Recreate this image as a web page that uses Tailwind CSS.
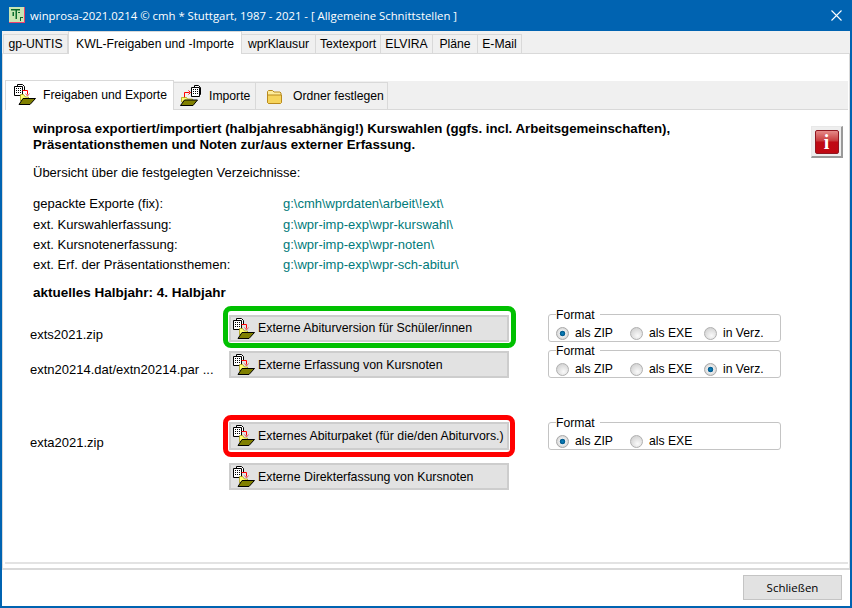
<!DOCTYPE html>
<html>
<head>
<meta charset="utf-8">
<script src="https://cdn.jsdelivr.net/npm/@tailwindcss/browser@4"></script>
<title>winprosa</title>
</head>
<body class="bg-white">
<svg width="0" height="0" class="absolute">
  <defs>
    <!-- export icon: sheets going into a folder -->
    <symbol id="exp" viewBox="0 0 22 22">
      <path d="M3.500.5h5l2 2v4h-7z" fill="#fff" stroke="#000"/>
      <path d="M.5 2.500h8v9h-8z" fill="#fff" stroke="#000"/>
      <path d="M2 4.500h5M2 6.500h5M2 8.500h5" stroke="#000" stroke-dasharray="1 1"/>
      <path d="M8.500 6.500h5v4" fill="none" stroke="#f00"/>
      <path d="M11.500 9.500l2 2.500 2-2.500" fill="none" stroke="#e04040" stroke-width=".8"/>
      <path d="M6.500 10.500h3l2 2.500h3v4h-8z" fill="#ffff70" stroke="#a09000" stroke-width=".7"/>
      <path d="M5 20.500l4-6h12.500l-5.500 6z" fill="#808000" stroke="#000"/>
    </symbol>
    <symbol id="imp" viewBox="0 0 22 22">
      <path d="M14.500.5h4l2 2v7h-6z" fill="#fff" stroke="#000"/>
      <path d="M11.500 2.500h8v9h-8z" fill="#fff" stroke="#000"/>
      <path d="M13 4.500h5M13 6.500h5M13 8.500h5" stroke="#000" stroke-dasharray="1 1"/>
      <path d="M4.500 13V7.500h5" fill="none" stroke="#f00"/>
      <path d="M8.500 5.500l2 2-2 2" fill="none" stroke="#f00"/>
      <path d="M1.500 12.500h5l1 1.500h5v3h-11z" fill="#ffff70" stroke="#a09000" stroke-width=".7"/>
      <path d="M.5 20.500l4-5.500h13l-4.500 5.500z" fill="#808000" stroke="#000"/>
    </symbol>
  </defs>
</svg>

<div class="w-[852px] h-[608px] flex flex-col border-x-2 border-b-2 border-[#0063b1] font-['Liberation_Sans',sans-serif] text-[12.200px] text-black overflow-hidden">
  <!-- Titlebar -->
  <div class="h-[31px] shrink-0 -mx-[2px] bg-[#0063b1] flex items-center pl-[9px] text-white font-['Open_Sans',sans-serif] text-[11.350px]">
    <svg width="16" height="16" viewBox="0 0 16 16" class="-mt-[1px]">
      <rect width="16" height="16" fill="#c8e6b4"/>
      <path d="M15 0h1v16H0v-1h15z" fill="#ef3f6e"/>
      <path d="M2 2h9v1.500H8V12H6.500V3.500H2zM3.500 5h1.500v4H3.500zM9 5h2v1H9z" fill="#0a6b2c"/>
      <path d="M11 10h3v1h-2v3h-1z" fill="#0a6b2c"/>
    </svg>
    <span class="ml-[5px]">winprosa-2021.0214 © cmh * Stuttgart, 1987 - 2021 - [ Allgemeine Schnittstellen ]</span>
    <svg width="11" height="11" viewBox="0 0 11 11" class="ml-auto mr-[10px] -mt-[1px]">
      <path d="M.5.500l10 10M10.500.500l-10 10" stroke="#fff" stroke-width="1.100"/>
    </svg>
  </div>

  <!-- Main tabs -->
  <div class="h-[22px] shrink-0 bg-[#f0f0f0] flex items-end pl-[1px] relative">
    <div class="w-[65px] h-[19px] border border-b-0 border-[#d9d9d9] flex items-center justify-center">gp-UNTIS</div>
    <div class="w-[174px] h-[23px] -mb-[1px] bg-white border border-b-0 border-[#d9d9d9] flex items-start pt-[3px] justify-center z-10">KWL-Freigaben und -Importe</div>
    <div class="w-[74px] h-[19px] border border-b-0 border-l-0 border-[#d9d9d9] flex items-center justify-center">wprKlausur</div>
    <div class="w-[65px] h-[19px] border border-b-0 border-l-0 border-[#d9d9d9] flex items-center justify-center">Textexport</div>
    <div class="w-[52px] h-[19px] border border-b-0 border-l-0 border-[#d9d9d9] flex items-center justify-center">ELVIRA</div>
    <div class="w-[45px] h-[19px] border border-b-0 border-l-0 border-[#d9d9d9] flex items-center justify-center">Pläne</div>
    <div class="w-[44px] h-[19px] border border-b-0 border-l-0 border-[#d9d9d9] flex items-center justify-center">E-Mail</div>
  </div>

  <!-- Outer panel -->
  <div class="h-[517px] shrink-0 border-x border-t border-b-2 border-[#d9d9d9] bg-white flex flex-col pt-[27px] pl-[2px] pr-[1px] pb-[4px]">
    <div class="flex-1 flex flex-col border-b-2 border-[#e3e3e3] min-h-0">
      <!-- Sub tabs -->
      <div class="h-[29px] shrink-0 bg-[#f0f0f0] border-b border-[#d9d9d9] flex items-end">
        <div class="w-[169px] h-[30px] -mb-[1px] bg-white border border-b-0 border-[#d9d9d9] flex items-center pl-[8px] pb-[1px] z-10">
          <svg width="22" height="22"><use href="#exp"/></svg>
          <span class="ml-[7px]">Freigaben und Exporte</span>
        </div>
        <div class="w-[82px] h-[27px] border border-b-0 border-l-0 border-[#d9d9d9] flex items-center pl-[6px]">
          <svg width="22" height="22"><use href="#imp"/></svg>
          <span class="ml-[7px]">Importe</span>
        </div>
        <div class="w-[132px] h-[27px] border border-b-0 border-l-0 border-[#d9d9d9] flex items-center pl-[10px]">
          <svg width="17" height="15" viewBox="0 0 17 15">
            <path d="M1.500 13.500V2.500l1-1h4l1.500 1.500h6l1 1v9.500l-1 1h-11.500z" fill="#fdeb9a" stroke="#b98a1e"/>
            <path d="M1.500 13.500V6h14v7.500l-1 1H2.500z" fill="#f6d45c" stroke="#b98a1e"/>
          </svg>
          <span class="ml-[10px]">Ordner festlegen</span>
        </div>
      </div>

      <!-- Content -->
      <div class="relative flex-1 pl-[28px] pr-[5px] pt-[11px] text-[13px]">
        <div class="flex justify-between items-start">
          <p class="font-bold text-[13.250px] leading-[16px] w-[760px]">winprosa exportiert/importiert (halbjahresabhängig!) Kurswahlen (ggfs. incl. Arbeitsgemeinschaften),<br>Präsentationsthemen und Noten zur/aus externer Erfassung.</p>
          <!-- info button -->
          <div class="w-[32px] h-[32px] mt-[5px] bg-[#eeeeee] border-r-2 border-b-2 border-[#9a9a9a] border-t border-l border-t-[#e8e8e8] border-l-[#e8e8e8] flex items-center justify-center">
            <div class="w-[24px] h-[24px] rounded-[2px] border border-[#8f1620] bg-[linear-gradient(#e58a88_0%,#c83a3c_45%,#bf0a14_50%,#c00812_100%)] flex items-center justify-center text-white font-bold font-['Liberation_Serif',serif] text-[20px] leading-none">i</div>
          </div>
        </div>

        <p class="mt-[7px] leading-[16px]">Übersicht über die festgelegten Verzeichnisse:</p>

        <div class="mt-[13px] grid grid-cols-[250px_1fr] auto-rows-[20.300px] items-center">
          <div>gepackte Exporte (fix):</div><div class="text-[#007a7a]">g:\cmh\wprdaten\arbeit\!ext\</div>
          <div>ext. Kurswahlerfassung:</div><div class="text-[#007a7a]">g:\wpr-imp-exp\wpr-kurswahl\</div>
          <div>ext. Kursnotenerfassung:</div><div class="text-[#007a7a]">g:\wpr-imp-exp\wpr-noten\</div>
          <div>ext. Erf. der Präsentationsthemen:</div><div class="text-[#007a7a]">g:\wpr-imp-exp\wpr-sch-abitur\</div>
        </div>

        <p class="mt-[10px] font-bold text-[13.500px] leading-[16px]">aktuelles Halbjahr: 4. Halbjahr</p>

        <!-- Row 1 -->
        <div class="-ml-[3px] mt-[13px] h-[28px] flex items-center">
          <div class="w-[199px] mt-[14px]">exts2021.zip</div>
          <button class="relative w-[280px] h-[27px] mt-[1px] bg-[#e2e2e2] border-2 border-[#cdcdcd] flex items-center pl-[2px] text-[12.350px]">
            <svg width="22" height="22"><use href="#exp"/></svg>
            <span class="ml-[3px]">Externe Abiturversion für Schüler/innen</span>
            <span class="absolute -left-[8px] -right-[9px] -top-[11px] -bottom-[8px] border-[5px] border-[#00c000] rounded-[8px]"></span>
          </button>
          <fieldset class="ml-[39px] w-[233px] h-[28px] border border-[#c4c4c4] rounded-[3px] relative flex items-end pb-[1px] pl-[7px] text-[12.200px] leading-[13px]">
            <span class="absolute left-[7px] -top-[7px] bg-white pr-[5px] leading-[15px]">Format</span>
            <span class="w-[13px] h-[13px] rounded-full border border-[#a8a8a8] bg-[radial-gradient(circle,#0a84c0_0%,#045a8c_32%,#eeeeee_40%,#c4c4c4_100%)]"></span><span class="ml-[6px] w-[55px]">als ZIP</span>
            <span class="w-[13px] h-[13px] rounded-full border border-[#b0b0b0] bg-[radial-gradient(circle_at_60%_70%,#fafafa,#c8c8c8)]"></span><span class="ml-[6px] w-[55px]">als EXE</span>
            <span class="w-[13px] h-[13px] rounded-full border border-[#b0b0b0] bg-[radial-gradient(circle_at_60%_70%,#fafafa,#c8c8c8)]"></span><span class="ml-[6px]">in Verz.</span>
          </fieldset>
        </div>

        <!-- Row 2 -->
        <div class="-ml-[3px] mt-[8px] h-[28px] flex items-center">
          <div class="w-[199px] mt-[12px] whitespace-nowrap">extn20214.dat/extn20214.par ...</div>
          <button class="w-[280px] h-[27px] mt-[1px] bg-[#e2e2e2] border-2 border-[#cdcdcd] flex items-center pl-[2px] text-[12.350px]">
            <svg width="22" height="22"><use href="#exp"/></svg>
            <span class="ml-[3px] mt-[2px]">Externe Erfassung von Kursnoten</span>
          </button>
          <fieldset class="ml-[39px] w-[233px] h-[28px] border border-[#c4c4c4] rounded-[3px] relative flex items-end pb-[1px] pl-[7px] text-[12.200px] leading-[13px]">
            <span class="absolute left-[7px] -top-[7px] bg-white pr-[5px] leading-[15px]">Format</span>
            <span class="w-[13px] h-[13px] rounded-full border border-[#b0b0b0] bg-[radial-gradient(circle_at_60%_70%,#fafafa,#c8c8c8)]"></span><span class="ml-[6px] w-[55px]">als ZIP</span>
            <span class="w-[13px] h-[13px] rounded-full border border-[#b0b0b0] bg-[radial-gradient(circle_at_60%_70%,#fafafa,#c8c8c8)]"></span><span class="ml-[6px] w-[55px]">als EXE</span>
            <span class="w-[13px] h-[13px] rounded-full border border-[#a8a8a8] bg-[radial-gradient(circle,#0a84c0_0%,#045a8c_32%,#eeeeee_40%,#c4c4c4_100%)]"></span><span class="ml-[6px]">in Verz.</span>
          </fieldset>
        </div>

        <!-- Row 3 -->
        <div class="-ml-[3px] mt-[44px] h-[28px] flex items-center">
          <div class="w-[199px] mt-[14px]">exta2021.zip</div>
          <button class="relative w-[280px] h-[28px] bg-[#e2e2e2] border-2 border-[#cdcdcd] flex items-center pl-[2px] text-[12.350px]">
            <svg width="22" height="22"><use href="#exp"/></svg>
            <span class="ml-[3px]">Externes Abiturpaket (für die/den Abiturvors.)</span>
            <span class="absolute -left-[8px] -right-[8px] -top-[9px] -bottom-[9px] border-[5px] border-[#ff0000] rounded-[8px]"></span>
          </button>
          <fieldset class="ml-[39px] w-[233px] h-[28px] border border-[#c4c4c4] rounded-[3px] relative flex items-end pb-[1px] pl-[7px] text-[12.200px] leading-[13px]">
            <span class="absolute left-[7px] -top-[7px] bg-white pr-[5px] leading-[15px]">Format</span>
            <span class="w-[13px] h-[13px] rounded-full border border-[#a8a8a8] bg-[radial-gradient(circle,#0a84c0_0%,#045a8c_32%,#eeeeee_40%,#c4c4c4_100%)]"></span><span class="ml-[6px] w-[55px]">als ZIP</span>
            <span class="w-[13px] h-[13px] rounded-full border border-[#b0b0b0] bg-[radial-gradient(circle_at_60%_70%,#fafafa,#c8c8c8)]"></span><span class="ml-[6px] w-[55px]">als EXE</span>
          </fieldset>
        </div>

        <!-- Row 4 -->
        <div class="-ml-[3px] mt-[13px] pl-[199px]">
          <button class="w-[280px] h-[27px] bg-[#e2e2e2] border-2 border-[#cdcdcd] flex items-center pl-[2px] text-[12.350px]">
            <svg width="22" height="22"><use href="#exp"/></svg>
            <span class="ml-[3px] mt-[2px]">Externe Direkterfassung von Kursnoten</span>
          </button>
        </div>
      </div>
    </div>
  </div>

  <!-- Footer -->
  <div class="flex-1 bg-white flex justify-end items-start pt-[5px] pr-[8px]">
    <button class="w-[99px] h-[25px] bg-[#e2e2e2] border border-[#c4c4c4] font-['Open_Sans',sans-serif] text-[11.500px]">Schließen</button>
  </div>
</div>
</body>
</html>
